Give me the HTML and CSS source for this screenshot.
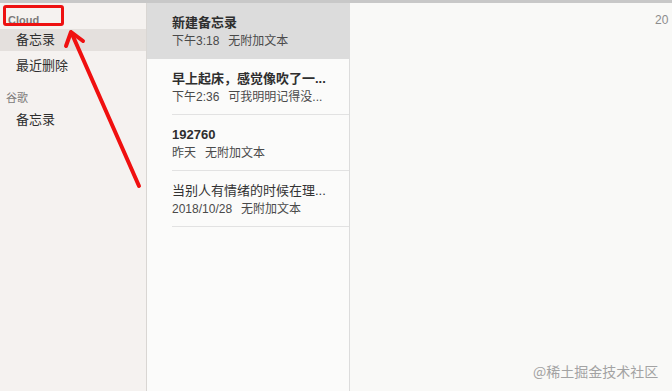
FILE: index.html
```html
<!DOCTYPE html>
<html lang="zh-CN">
<head>
    <meta charset="UTF-8">
    <title>备忘录</title>
    <link rel="stylesheet" href="styles.css">
</head>
<body>
    <div class="window">
        <div class="topbar"></div>
        <div class="main">
            <div class="sidebar">
                <div class="group-title cloud">Cloud</div>
                <div class="folder active">备忘录</div>
                <div class="folder">最近删除</div>
                <div class="group-title">谷歌</div>
                <div class="folder">备忘录</div>
            </div>

            <div class="note-list">
                <div class="note selected">
                    <div class="note-title">新建备忘录</div>
                    <div class="note-meta"><span class="time">下午3:18</span>无附加文本</div>
                </div>
                <div class="note">
                    <div class="note-title">早上起床，感觉像吹了一...</div>
                    <div class="note-meta"><span class="time">下午2:36</span>可我明明记得没...</div>
                </div>
                <div class="note">
                    <div class="note-title">192760</div>
                    <div class="note-meta"><span class="time">昨天</span>无附加文本</div>
                </div>
                <div class="note">
                    <div class="note-title plain">当别人有情绪的时候在理...</div>
                    <div class="note-meta"><span class="time">2018/10/28</span>无附加文本</div>
                </div>
            </div>

            <div class="editor">
                <div class="editor-date">20</div>
            </div>
        </div>

        <!-- 标注：红框和箭头 -->
        <div class="mark-box"></div>
        <svg class="mark-arrow" width="672" height="391" viewBox="0 0 672 391">
            <line x1="139" y1="186" x2="72" y2="34" stroke="#f01010" stroke-width="4" stroke-linecap="round"/>
            <polyline points="66,46 71,32 83,41" fill="none" stroke="#f01010" stroke-width="4" stroke-linecap="round" stroke-linejoin="round"/>
        </svg>

        <div class="watermark">@稀土掘金技术社区</div>
    </div>
</body>
</html>
```

FILE: styles.css
```css
* {
    margin: 0;
    padding: 0;
    box-sizing: border-box;
}

body {
    font-family: "Liberation Sans", "Noto Sans CJK SC", sans-serif;
    background: #f9f9f7;
    width: 672px;
    height: 391px;
    overflow: hidden;
}

.window {
    position: relative;
    width: 672px;
    height: 391px;
}

.topbar {
    height: 3px;
    background: #c8c8c8;
}

.main {
    display: flex;
    height: 388px;
}

.sidebar {
    width: 147px;
    background: #f5f2f0;
    border-right: 1px solid #d9d6d3;
    padding-top: 7px;
}

.group-title {
    font-size: 11px;
    color: #7c7a79;
    font-weight: bold;
    padding-left: 6px;
    height: 19px;
    line-height: 14px;
    padding-top: 3px;
}

.group-title.cloud {
    padding-left: 8px;
}

.sidebar .group-title:nth-of-type(4) {
    margin-top: 9px;
    font-weight: normal;
}

.folder {
    font-size: 13px;
    color: #2e2e2e;
    padding-left: 16px;
    height: 26px;
    line-height: 26px;
}

.folder.active {
    background: #e4e0dd;
    height: 22px;
    line-height: 22px;
    margin-bottom: 2px;
}

.note-list {
    width: 203px;
    background: #fbfbfa;
    border-right: 1px solid #dcdcdc;
}

.note {
    height: 56px;
    padding: 11px 0 0 25px;
    position: relative;
}

.note::after {
    content: "";
    position: absolute;
    left: 25px;
    right: 0;
    bottom: 0;
    border-bottom: 1px solid #e2e2e2;
}

.note.selected {
    background: #dcdcdc;
}

.note.selected::after {
    display: none;
}

.note-title {
    font-size: 13px;
    font-weight: bold;
    color: #2e2e2e;
    line-height: 17px;
    white-space: nowrap;
}

.note-title.plain {
    font-weight: normal;
    color: #333;
}

.note-meta {
    font-size: 12px;
    color: #4a4a4a;
    line-height: 17px;
    margin-top: 2px;
    white-space: nowrap;
}

.note-meta .time {
    margin-right: 9px;
}

.editor {
    flex: 1;
    background: #f9f9f7;
    overflow: hidden;
}

.editor-date {
    font-size: 12px;
    color: #8c8c8c;
    padding: 10px 0 0 305px;
    white-space: nowrap;
}

.mark-box {
    position: absolute;
    left: 3px;
    top: 5px;
    width: 61px;
    height: 21px;
    border: 3px solid #ee1111;
    border-radius: 3px;
}

.mark-arrow {
    position: absolute;
    left: 0;
    top: 0;
}

.watermark {
    position: absolute;
    left: 533px;
    top: 361px;
    font-size: 14px;
    color: #a3a3a3;
    font-family: "Noto Sans CJK SC", sans-serif;
}
```
